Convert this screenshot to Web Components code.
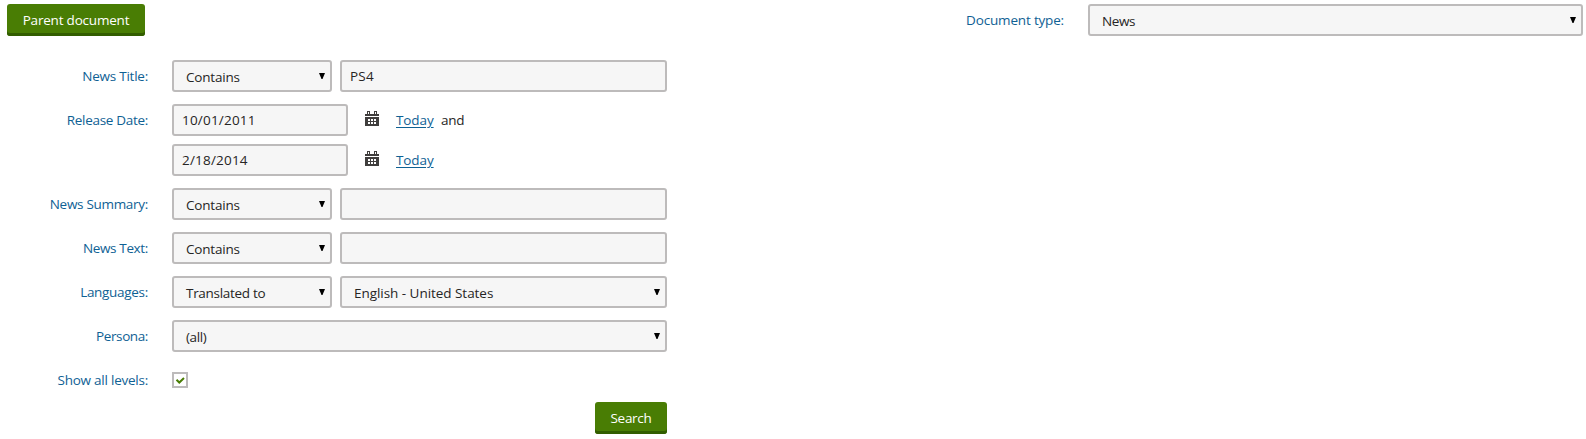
<!DOCTYPE html>
<html lang="en">
<head>
<meta charset="utf-8">
<title>Search documents</title>
<style>
body{margin:0;background:#fff;color:#262524;font:13.5px/20px "Open Sans","Noto Sans",sans-serif}
</style>
</head>
<body>
<search-page></search-page>
<script>
const define = (name, html, setup) => {
  const template = document.createElement('template');
  template.innerHTML = html;
  customElements.define(name, class extends HTMLElement {
    constructor() {
      super();
      this.attachShadow({mode: 'open'}).append(template.content.cloneNode(true));
    }
    connectedCallback() { if (setup) setup(this, this.shadowRoot); }
  });
};

define('ui-button', `
<style>
:host{display:block;flex:none}
button{display:block;box-sizing:border-box;width:100%;height:32px;padding:0 0 1px;border:0;border-radius:3px;background:#497d04;box-shadow:inset 0 -3px #325d00;color:#fff;font:inherit;letter-spacing:inherit;white-space:nowrap}
</style><button><slot></slot></button>`);

define('ui-select', `
<style>
:host{display:flex;box-sizing:border-box;flex:none;height:32px;border:2px solid #bdbbbb;border-radius:3px;background:#f6f6f6;justify-content:space-between;padding:5px 4px 0 12px;line-height:20px;white-space:nowrap}
svg{display:block;width:8px;height:6px;margin-top:6px}
</style><span><slot></slot></span><svg viewBox="0 0 8 6"><path d="M1 0h6L4.5 6h-1z" fill="#000"/></svg>`);

define('ui-text', `
<style>
:host{display:block;flex:none}
div{box-sizing:border-box;height:32px;border:2px solid #bdbbbb;border-radius:3px;background:#f6f6f6;padding:4px 8px;line-height:20px;white-space:nowrap}
</style><div><slot></slot></div>`);

define('ui-check', `
<style>
:host{display:block;box-sizing:border-box;width:16px;height:16px;border:2px solid #bdbbbb;background:#fff;margin-top:8px}
svg{display:block}
</style><svg width="12" height="12" viewBox="0 0 12 12"><path d="M2.5 5.7l2.8 2.8L10 4" fill="none" stroke="#497d04" stroke-width="2"/></svg>`);

define('calendar-icon', `
<style>:host{display:block;width:14px;height:15px;margin:7px 17px 0}svg{display:block}</style>
<svg width="14" height="15" viewBox="0 0 14 15" shape-rendering="crispEdges"><path fill="#403e3d" fill-rule="evenodd" d="M2 0h3v3h4V0h3v3h2v2H0V3h2zM3 1v2h1V1zm7 0v2h1V1zM0 6h14v9H0zM3 8v2h2V8zm3 0v2h2V8zm3 0v2h2V8zM3 11v2h2v-2zm3 0v2h2v-2zm3 0v2h2v-2z"/></svg>`);

define('date-line', `
<style>
:host{display:flex;height:32px}
ui-text{width:176px;letter-spacing:.2px}
a{color:#0f6194;text-decoration:underline;text-decoration-thickness:1px;text-underline-offset:2px;letter-spacing:-.1px}
.l{padding-top:6px;width:45px}
.t{padding-top:6px}
</style><ui-text><slot></slot></ui-text><calendar-icon></calendar-icon><span class="l"><a>Today</a></span><span class="t"><slot name="after"></slot></span>`);

define('form-row', `
<style>
:host{display:flex;gap:24px}
.label{width:148px;text-align:right;color:#0f6194;padding-top:6px;white-space:nowrap;letter-spacing:-.3px}
.fields{display:flex;flex-wrap:wrap;gap:8px;width:495px;min-height:32px}
</style><div class="label"><slot name="label"></slot></div><div class="fields"><slot></slot></div>`);

define('search-page', `
<style>
:host{display:block;height:439px;overflow:hidden}
header{display:flex;padding:4px 3px 0 7px;height:60px;box-sizing:border-box}
header>span{margin-left:auto;padding:6px 24px 0 0;color:#0f6194}
main{display:grid;gap:12px}
.op{width:160px}.val{width:327px}.full{width:495px}
footer{display:flex;justify-content:flex-end;width:667px;margin-top:6px}
.contains,#b1{letter-spacing:-.2px}#l0{letter-spacing:-.17px}#v0,#v7,#l6{letter-spacing:-.4px}
#l7,#l1{letter-spacing:-.24px}#l4{letter-spacing:-.35px}#v5,#b2,#and{letter-spacing:-.3px}#v1{letter-spacing:.2px}#v6{letter-spacing:-.04px}
</style>
<header><ui-button style="width:138px"><span id="b1">Parent document</span></ui-button><span><span id="l0">Document type:</span></span><ui-select class="full"><span id="v0">News</span></ui-select></header>
<main>
<form-row><span slot="label" id="l1">News Title:</span><ui-select class="op"><span class="contains">Contains</span></ui-select><ui-text class="val"><span id="v1">PS4</span></ui-text></form-row>
<form-row><span slot="label" id="l2">Release Date:</span><date-line><span id="v2">10/01/2011</span><span slot="after" id="and">and</span></date-line><date-line><span id="v3">2/18/2014</span></date-line></form-row>
<form-row><span slot="label" id="l3">News Summary:</span><ui-select class="op"><span class="contains">Contains</span></ui-select><ui-text class="val"></ui-text></form-row>
<form-row><span slot="label" id="l4">News Text:</span><ui-select class="op"><span class="contains">Contains</span></ui-select><ui-text class="val"></ui-text></form-row>
<form-row><span slot="label" id="l5">Languages:</span><ui-select class="op"><span id="v5">Translated to</span></ui-select><ui-select class="val"><span id="v6">English - United States</span></ui-select></form-row>
<form-row><span slot="label" id="l6">Persona:</span><ui-select class="full"><span id="v7">(all)</span></ui-select></form-row>
<form-row><span slot="label" id="l7">Show all levels:</span><ui-check></ui-check></form-row>
</main>
<footer><ui-button style="width:72px"><span id="b2">Search</span></ui-button></footer>`);
</script>
</body>
</html>
